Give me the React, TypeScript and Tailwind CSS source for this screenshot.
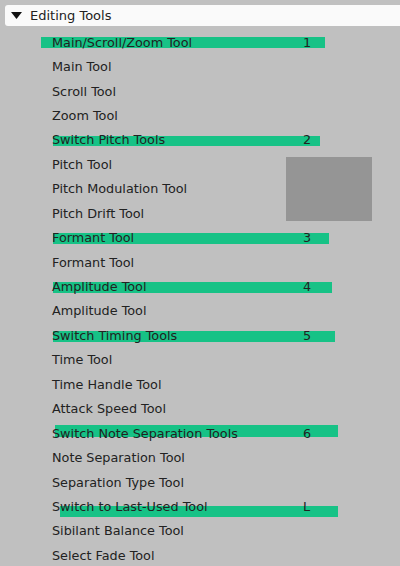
type Row = {
  label: string;
  key?: string;
  // green marker stroke behind the row: left x, width, top offset, height
  mark?: { left: number; width: number; top: number; height: number };
};

const rows: Row[] = [
  { label: "Main/Scroll/Zoom Tool", key: "1", mark: { left: 41, width: 284, top: 7, height: 11 } },
  { label: "Main Tool" },
  { label: "Scroll Tool" },
  { label: "Zoom Tool" },
  { label: "Switch Pitch Tools", key: "2", mark: { left: 53, width: 267, top: 8, height: 10 } },
  { label: "Pitch Tool" },
  { label: "Pitch Modulation Tool" },
  { label: "Pitch Drift Tool" },
  { label: "Formant Tool", key: "3", mark: { left: 53, width: 276, top: 7, height: 11 } },
  { label: "Formant Tool" },
  { label: "Amplitude Tool", key: "4", mark: { left: 53, width: 279, top: 8, height: 11 } },
  { label: "Amplitude Tool" },
  { label: "Switch Timing Tools", key: "5", mark: { left: 53, width: 282, top: 8, height: 11 } },
  { label: "Time Tool" },
  { label: "Time Handle Tool" },
  { label: "Attack Speed Tool" },
  { label: "Switch Note Separation Tools", key: "6", mark: { left: 55, width: 283, top: 4, height: 12 } },
  { label: "Note Separation Tool" },
  { label: "Separation Type Tool" },
  { label: "Switch to Last-Used Tool", key: "L", mark: { left: 60, width: 278, top: 12, height: 11 } },
  { label: "Sibilant Balance Tool" },
  { label: "Select Fade Tool" },
];

export default function App() {
  return (
    <div
      className="relative h-[566px] w-[400px] overflow-hidden bg-[#c0c0c0] text-[12.8px] text-[#222]"
      style={{ fontFamily: '"DejaVu Sans", sans-serif' }}
    >
      <div className="pt-[5px]">
        <div className="ml-[5px] flex h-[21px] items-center gap-[8px] rounded-l-[3px] bg-[#fafafa] pl-[6px] text-[13px]">
          <svg width="11" height="7" viewBox="0 0 11 7">
            <path d="M0 0 H11 L5.5 7 Z" fill="#111" />
          </svg>
          <span>Editing Tools</span>
        </div>
      </div>
      <ul className="mt-[4px]">
        {rows.map((r, i) => (
          <li key={i} className="relative flex h-[24.45px] items-center">
            {r.mark && (
              <span
                className="absolute bg-[#17c286]"
                style={{ left: r.mark.left, width: r.mark.width, top: r.mark.top, height: r.mark.height }}
              />
            )}
            <span className="relative ml-[52px] w-[251px]">{r.label}</span>
            {r.key && <span className="relative">{r.key}</span>}
          </li>
        ))}
      </ul>
      {/* grey swatch floating over the list */}
      <div className="absolute left-[286px] top-[157px] h-[64px] w-[86px] bg-[#959595]" />
    </div>
  );
}
